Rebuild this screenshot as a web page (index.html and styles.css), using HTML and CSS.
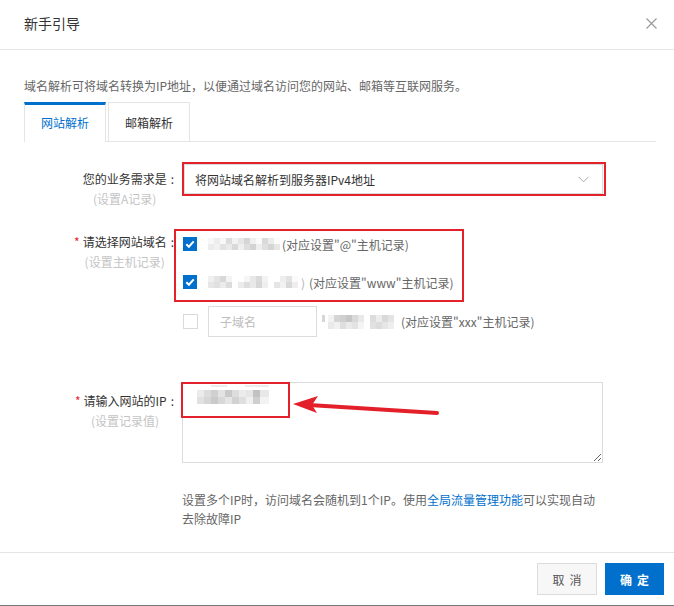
FILE: index.html
```html
<!DOCTYPE html>
<html lang="zh-CN">
<head>
<meta charset="utf-8">
<title>新手引导</title>
<link rel="stylesheet" href="styles.css">
</head>
<body>
<div class="dialog">
  <header class="dlg-head">
    <span class="title">新手引导</span>
    <span class="close" aria-label="关闭">
      <svg width="11" height="11" viewBox="0 0 11 11"><path d="M0.5 0.5 L10.5 10.5 M10.5 0.5 L0.5 10.5" stroke="#9a9a9a" stroke-width="1.2" fill="none"/></svg>
    </span>
  </header>

  <main class="dlg-body">
    <p class="desc">域名解析可将域名转换为IP地址，以便通过域名访问您的网站、邮箱等互联网服务。</p>

    <div class="tabs">
      <div class="tab active">网站解析</div>
      <div class="tab">邮箱解析</div>
    </div>

    <div class="row row-type">
      <div class="label">
        <div class="lbl-text"><span>您的业务需求是</span><span class="sub">(设置A记录)</span></div>
        <span class="colon">:</span>
      </div>
      <div class="control">
        <div class="select-wrap">
          <div class="select">
            <span>将网站域名解析到服务器IPv4地址</span>
            <svg width="11" height="7" viewBox="0 0 11 7"><polyline points="0.5,0.8 5.5,5.8 10.5,0.8" stroke="#a8a8a8" stroke-width="1" fill="none"/></svg>
          </div>
          <span class="mark mark-select"></span>
        </div>
      </div>
    </div>

    <div class="row row-domain">
      <div class="label">
        <span class="star">*</span>
        <div class="lbl-text"><span>请选择网站域名</span><span class="sub">(设置主机记录)</span></div>
        <span class="colon">:</span>
      </div>
      <div class="control">
        <div class="cb-group">
          <div class="cb-row cb-first">
            <span class="cb checked"><svg width="14" height="14" viewBox="0 0 14 14"><polyline points="3.3,7.2 5.9,9.7 10.7,4.4" stroke="#fff" stroke-width="2" fill="none"/></svg></span>
            <span class="mz mz1"></span>
            <span class="cb-text">(对应设置"@"主机记录)</span>
          </div>
          <div class="cb-row cb-second">
            <span class="cb checked"><svg width="14" height="14" viewBox="0 0 14 14"><polyline points="3.3,7.2 5.9,9.7 10.7,4.4" stroke="#fff" stroke-width="2" fill="none"/></svg></span>
            <span class="mz mz2"></span>
            <span class="paren">)</span>
            <span class="cb-text">(对应设置"www"主机记录)</span>
          </div>
          <span class="mark mark-group"></span>
        </div>
        <div class="cb-row cb-third">
          <span class="cb empty"></span>
          <span class="sub-input">子域名</span>
          <span class="mz mz3"></span>
          <span class="cb-text">(对应设置"xxx"主机记录)</span>
        </div>
      </div>
    </div>

    <div class="row row-ip">
      <div class="label">
        <span class="star">*</span>
        <div class="lbl-text"><span>请输入网站的IP</span><span class="sub">(设置记录值)</span></div>
        <span class="colon">:</span>
      </div>
      <div class="control">
        <div class="ta-wrap">
          <div class="textarea"><span class="mz mz4"></span></div>
          <span class="mark mark-ip"></span>
          <svg class="arrow" width="150" height="26" viewBox="0 0 150 26">
            <line x1="17" y1="11" x2="145" y2="19" stroke="#e3202a" stroke-width="4" stroke-linecap="round"/>
            <polygon points="1,10 26,2 20,11 25,19" fill="#e3202a"/>
          </svg>
        </div>
      </div>
    </div>

    <div class="row row-help">
      <div></div>
      <p class="help"><span>设置多个IP时，访问域名会随机到1个IP。使用</span><a class="link" href="#">全局流量管理功能</a><span>可以实现自动</span><br><span>去除故障IP</span></p>
    </div>
  </main>

  <footer class="dlg-foot">
    <button class="btn btn-cancel">取消</button>
    <button class="btn btn-ok">确定</button>
  </footer>
</div>
</body>
</html>
```
FILE: styles.css
```css
* { box-sizing: border-box; }
html, body { margin: 0; padding: 0; background: #fff; }
body {
  font-family: "Noto Sans CJK SC", "Noto Sans", "Liberation Sans", sans-serif;
  font-size: 12px;
  color: #333;
  width: 674px;
  height: 606px;
  overflow: hidden;
}
.dialog {
  width: 674px;
  height: 606px;
  display: flex;
  flex-direction: column;
  border-bottom: 1px solid #777;
}
.dlg-head {
  height: 50px;
  flex: none;
  border-bottom: 1px solid #e6e6e6;
  display: flex;
  align-items: center;
  justify-content: space-between;
  padding: 0 17px 3px 24px;
}
.title { font-size: 14px; color: #333; line-height: 20px; }
.close { display: flex; width: 11px; height: 11px; }

.dlg-body {
  flex: 1;
  padding: 26px 18px 0 24px;
}
.desc { margin: 0; line-height: 20px; color: #666; }

.tabs {
  margin-top: 6px;
  height: 40px;
  display: flex;
  align-items: flex-start;
  gap: 2px;
  border-bottom: 1px solid #e5e5e5;
}
.tab {
  width: 82px;
  height: 39px;
  border: 1px solid #e5e5e5;
  border-bottom: none;
  display: flex;
  align-items: center;
  justify-content: center;
  color: #333;
  background: #fff;
}
.tab.active {
  height: 40px;
  border-top: 3px solid #0070cc;
  padding-bottom: 2px;
  color: #0070cc;
}

.row {
  display: grid;
  grid-template-columns: 156px 421px;
  column-gap: 2px;
}
.label {
  display: flex;
  justify-content: flex-end;
  align-items: flex-start;
  line-height: 20px;
  color: #333;
}
.lbl-text { display: flex; flex-direction: column; align-items: center; }
.sub { color: #c4c4c4; }
.star { color: #e4262b; margin-right: 3px; }
.colon { padding: 0 6px 0 4px; }

.row-type { margin-top: 22px; }
.row-type .label { padding-top: 5px; }
.select-wrap { position: relative; margin-left: 2px; width: 419px; }
.select {
  height: 30px;
  border: 1px solid #dcdcdc;
  display: flex;
  align-items: center;
  justify-content: space-between;
  padding: 0 13px 0 10px;
  color: #333;
}
.mark {
  position: absolute;
  border: 2px solid #e4202b;
  pointer-events: none;
}
.mark-select { left: -2px; top: -2px; right: -3px; bottom: -2px; }

.row-domain { margin-top: 23px; }
.cb-group { position: relative; }
.mark-group { left: -8px; top: -5px; right: 139px; bottom: -10px; }
.cb-row {
  display: flex;
  align-items: center;
  padding-left: 1px;
  color: #666;
}
.cb-first { height: 20px; margin-top: 2px; }
.cb-second { height: 20px; margin-top: 18px; }
.cb-third { height: 31px; margin-top: 14px; }
.cb { width: 14px; height: 14px; flex: none; display: flex; margin-right: 11px; }
.cb.checked { background: #0070cc; }
.cb.empty { width: 15px; height: 15px; border: 1px solid #d9d9d9; margin-right: 10px; }
.cb-text { white-space: nowrap; }
.paren { color: #b5b5b5; margin: 0 4px 0 3px; }
.sub-input {
  width: 109px;
  height: 31px;
  border: 1px solid #dcdcdc;
  color: #bcbcbc;
  display: flex;
  align-items: center;
  padding-left: 11px;
  margin-right: 5px;
}

.mz { display: inline-block; flex: none; }
.mz1 {
  width: 72px; height: 12px; margin-right: 2px;
  background:
    linear-gradient(90deg, #f7f7f7 0 6px, #ededed 6px 12px, #f8f8f8 12px 18px, #dcdcdc 18px 24px, #f2f2f2 24px 30px, #e6e6e6 30px 36px, #d6d6d6 36px 42px, #f0f0f0 42px 48px, #fafafa 48px 54px, #dadada 54px 60px, #ececec 60px 66px, #fbfbfb 66px 72px) top / 100% 6px no-repeat,
    linear-gradient(90deg, #ececec 0 6px, #f1f1f1 6px 12px, #e2e2e2 12px 18px, #eaeaea 18px 24px, #d9d9d9 24px 30px, #efefef 30px 36px, #dedede 36px 42px, #d3d3d3 42px 48px, #eeeeee 48px 54px, #e0e0e0 54px 60px, #d5d5d5 60px 66px, #e6e6e6 66px 72px) bottom / 100% 6px no-repeat;
}
.mz2 {
  width: 90px; height: 12px;
  background:
    linear-gradient(90deg, #f0f0f0 0 6px, #e4e4e4 6px 12px, #d8d8d8 12px 18px, #f4f4f4 18px 24px, #fff 24px 36px, #f6f6f6 36px 42px, #e8e8e8 42px 48px, #dadada 48px 54px, #f3f3f3 54px 60px, #fff 60px 72px, #eeeeee 72px 78px, #e2e2e2 78px 84px, #fafafa 84px 90px) top / 100% 6px no-repeat,
    linear-gradient(90deg, #e6e6e6 0 6px, #e0e0e0 6px 12px, #ececec 12px 18px, #dcdcdc 18px 24px, #fff 24px 30px, #ebebeb 30px 36px, #dedede 36px 42px, #e9e9e9 42px 48px, #d7d7d7 48px 54px, #efefef 54px 60px, #fff 60px 66px, #e5e5e5 66px 72px, #f2f2f2 72px 78px, #d9d9d9 78px 84px, #eeeeee 84px 90px) bottom / 100% 6px no-repeat;
}
.mz3 {
  width: 72px; height: 14px; margin-right: 7px;
  background:
    linear-gradient(90deg, #d6d6d6 0 3px, #fff 3px 6px, #f2f2f2 6px 12px, #d5d5d5 12px 18px, #cfcfcf 18px 24px, #c6c6c6 24px 30px, #d9d9d9 30px 36px, #e9e9e9 36px 42px, #fff 42px 48px, #dcdcdc 48px 54px, #ececec 54px 60px, #d9d9d9 60px 66px, #e4e4e4 66px 72px) top / 100% 7px no-repeat,
    linear-gradient(90deg, #fff 0 6px, #e9e9e9 6px 12px, #f1f1f1 12px 18px, #dedede 18px 24px, #eaeaea 24px 30px, #e3e3e3 30px 36px, #f4f4f4 36px 42px, #fff 42px 48px, #e1e1e1 48px 54px, #dcdcdc 54px 60px, #e6e6e6 60px 66px, #eeeeee 66px 72px) bottom / 100% 7px no-repeat;
}
.textarea {
  height: 81px;
  width: 421px;
  border: 1px solid #dcdcdc;
  padding: 2px 14px;
  resize: vertical;
  overflow: auto;
}
.mz4 {
  display: block;
  width: 72px; height: 19px;
  background:
    linear-gradient(90deg, #fff 0 14px, #ededed 14px 30px, #fff 30px 48px, #ededed 48px 72px) top / 100% 2px no-repeat,
    linear-gradient(90deg, #ebebeb 0 7px, #dcdcdc 7px 14px, #d0d0d0 14px 21px, #e3e3e3 21px 28px, #c9c9c9 28px 35px, #dddddd 35px 42px, #ececec 42px 49px, #e6e6e6 49px 56px, #c2c2c2 56px 63px, #e8e8e8 63px 72px) 0 5px / 100% 7px no-repeat,
    linear-gradient(90deg, #e1e1e1 0 7px, #d6d6d6 7px 14px, #cacaca 14px 21px, #d8d8d8 21px 28px, #e5e5e5 28px 35px, #d2d2d2 35px 42px, #dfdfdf 42px 49px, #f0f0f0 49px 56px, #cfcfcf 56px 63px, #f3f3f3 63px 72px) 0 12px / 100% 7px no-repeat;
}

.row-domain .label { padding-top: 0; }
.row-ip { margin-top: 45px; }
.row-ip .label { padding-top: 9px; }
.ta-wrap { position: relative; }
.mark-ip { left: -1px; top: 0; width: 109px; height: 36px; }
.arrow { position: absolute; left: 110px; top: 12px; }

.row-help { margin-top: 27px; }
.help {
  margin: 0;
  line-height: 19px;
  color: #666;
  white-space: nowrap;
}
.help .link { color: #0070cc; text-decoration: none; }

.dlg-foot {
  flex: none;
  border-top: 1px solid #e5e5e5;
  display: flex;
  justify-content: flex-end;
  gap: 8px;
  padding: 10px 10px 10px 0;
}
.btn {
  height: 32px;
  font-family: inherit;
  font-size: 12px;
  letter-spacing: 5px;
  text-indent: 5px;
  padding: 0;
  cursor: pointer;
}
.btn-cancel {
  width: 60px;
  background: #f7f7f7;
  border: 1px solid #dcdcdc;
  color: #555;
}
.btn-ok {
  width: 59px;
  background: #0070cc;
  border: 1px solid #0070cc;
  color: #fff;
  font-weight: bold;
}
```
